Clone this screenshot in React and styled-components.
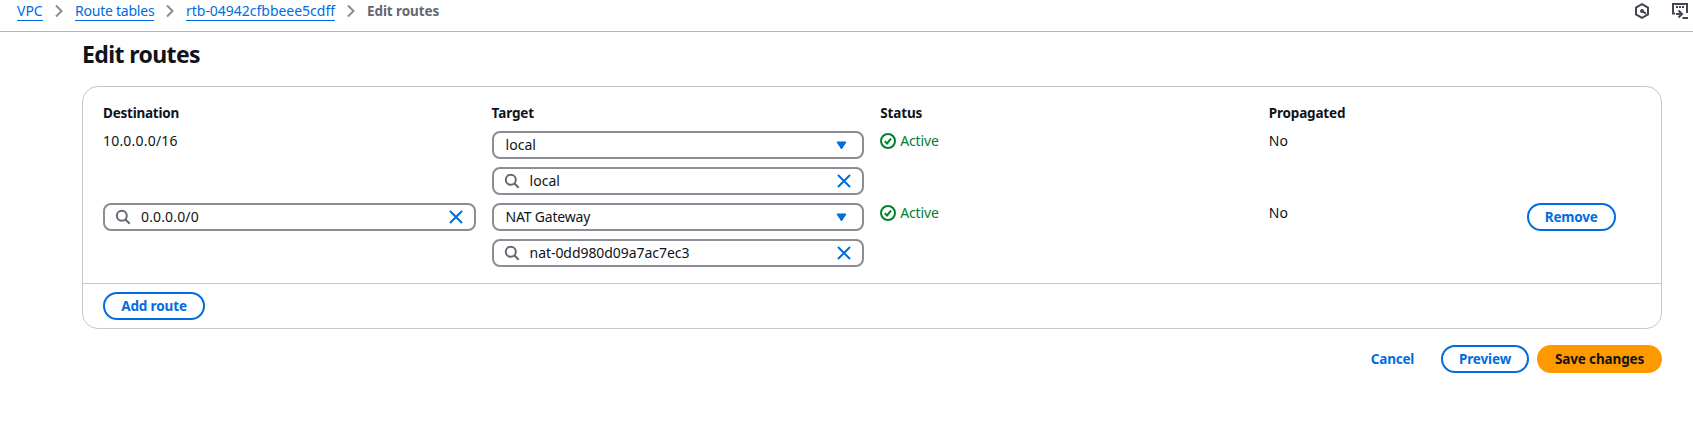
import React from "react";
import styled, { createGlobalStyle } from "styled-components";

const Global = createGlobalStyle`
  * { box-sizing: border-box; }
  body {
    margin: 0;
    background: #fff;
    color: #0f141a;
    font: 14px/20px "Noto Sans", "Open Sans", sans-serif;
  }
`;

const Label = styled.span`
  letter-spacing: ${(p) => p.$track || 0}px;
  white-space: nowrap;
`;

const TopBar = styled.header`
  display: flex;
  justify-content: space-between;
  height: 32px;
  padding: 1px 5px 0 17px;
  border-bottom: 1px solid #b4b4bb;
`;

const Breadcrumbs = styled.nav`
  display: flex;
  align-items: flex-start;
`;

const Crumb = styled.a`
  width: ${(p) => p.$w}px;
  height: 20px;
  border-bottom: 1px solid #006ce0;
  color: #006ce0;
  white-space: nowrap;
`;

const CurrentCrumb = styled.span`
  color: #656871;
  font-size: 13.5px;
  font-weight: 700;
`;

const Separator = styled.svg`
  width: 8px;
  height: 14px;
  margin: 3px 12px 0;
  fill: none;
  stroke: #8c8c94;
  stroke-width: 2;
`;

const Tools = styled.div`
  display: flex;
  gap: 22px;
  padding-top: 1px;
`;

const ToolIcon = styled.svg`
  width: 16px;
  height: 16px;
  margin-top: 1px;
  fill: none;
  stroke: #424650;
  stroke-width: 2;
`;

const Main = styled.main`
  width: 1580px;
  margin-left: 82px;
`;

const Title = styled.h1`
  margin: 0;
  padding-top: 7px;
  height: 54px;
  font-size: 23px;
  line-height: 31px;
  font-weight: 700;
`;

const Panel = styled.section`
  height: 243px;
  border: 1px solid #c6c6cd;
  border-radius: 16px;
`;

const PanelBody = styled.div`
  height: 196px;
  padding: 16px 20px 0;
`;

const PanelFooter = styled.div`
  padding: 8px 20px 0;
  border-top: 1px solid #c6c6cd;
`;

const RouteRow = styled.div`
  display: grid;
  grid-template-columns: repeat(3, 372.6px) 242px auto;
  column-gap: 16px;
  justify-content: start;
  align-items: start;
  margin-bottom: 8px;
`;

const HeaderRow = styled(RouteRow)`
  font-size: 13.5px;
  font-weight: 700;
`;

const Stack = styled.div`
  display: flex;
  flex-direction: column;
  gap: 8px;
`;

const Field = styled.div`
  display: flex;
  align-items: center;
  height: 28px;
  padding: ${(p) => (p.$search ? "0 12px 0 10px" : "0 15px 0 12px")};
  border: 2px solid #8c8c94;
  border-radius: 8px;
`;

const FieldText = styled(Label)`
  flex: 1;
`;

const SearchGlyph = styled.svg`
  width: 16px;
  height: 16px;
  margin-right: 10px;
  fill: none;
  stroke: #656871;
  stroke-width: 2;
`;

const ClearGlyph = styled.svg`
  width: 14px;
  height: 14px;
  margin-right: -1px;
  fill: none;
  stroke: #006ce0;
  stroke-width: 2;
`;

const Caret = styled.svg`
  width: 11px;
  height: 9px;
  fill: #006ce0;
  stroke: #006ce0;
  stroke-linejoin: round;
`;

const Status = styled.div`
  display: flex;
  align-items: center;
  gap: 4px;
  color: #00802f;
`;

const StatusGlyph = styled.svg`
  width: 16px;
  height: 16px;
  fill: none;
  stroke: #00802f;
  stroke-width: 2;
`;

const Button = styled.button`
  display: flex;
  align-items: center;
  justify-content: center;
  width: ${(p) => p.$w}px;
  height: 28px;
  padding: 0;
  border: 2px solid ${(p) => (p.$kind === "primary" ? "#ff9900" : p.$kind === "link" ? "transparent" : "#006ce0")};
  border-radius: 14px;
  background: ${(p) => (p.$kind === "primary" ? "#ff9900" : "transparent")};
  color: ${(p) => (p.$kind === "primary" ? "#0f141a" : "#006ce0")};
  font: inherit;
  font-size: 13.5px;
  font-weight: 700;
`;

const Actions = styled.div`
  display: flex;
  justify-content: flex-end;
  gap: 8px;
  margin-top: 16px;
`;

const Chevron = () => (
  <Separator viewBox="0 0 8 14"><path d="M1 1.5 6.5 7 1 12.5" /></Separator>
);

const SearchField = ({ value, track }) => (
  <Field $search>
    <SearchGlyph viewBox="0 0 16 16"><circle cx="6.8" cy="6.8" r="5" /><path d="m10.5 10.5 4.2 4.2" /></SearchGlyph>
    <FieldText $track={track}>{value}</FieldText>
    <ClearGlyph viewBox="0 0 14 14"><path d="m1 1 12 12M13 1 1 13" /></ClearGlyph>
  </Field>
);

const SelectField = ({ value, track }) => (
  <Field>
    <FieldText $track={track}>{value}</FieldText>
    <Caret viewBox="0 0 11 9"><path d="M1 1h9L5.5 8Z" /></Caret>
  </Field>
);

const ActiveStatus = () => (
  <Status>
    <StatusGlyph viewBox="0 0 16 16"><circle cx="8" cy="8" r="7" /><path d="m4.7 8.1 2.3 2.3 4-4.8" /></StatusGlyph>
    <Label $track={-0.15}>Active</Label>
  </Status>
);

export default function App() {
  return (
    <>
      <Global />
      <TopBar>
        <Breadcrumbs>
          <Crumb $w={26}><Label>VPC</Label></Crumb>
          <Chevron />
          <Crumb $w={79}><Label $track={-0.23}>Route tables</Label></Crumb>
          <Chevron />
          <Crumb $w={149}><Label $track={-0.02}>rtb-04942cfbbeee5cdff</Label></Crumb>
          <Chevron />
          <CurrentCrumb><Label $track={-0.1}>Edit routes</Label></CurrentCrumb>
        </Breadcrumbs>
        <Tools>
          <ToolIcon viewBox="0 0 16 16"><path d="M8 1.2 14 4.6v6.8l-6 3.4-6-3.4V4.6Z" /><circle cx="8" cy="8" r="1" /><path d="m8 8 4 2.6" /></ToolIcon>
          <ToolIcon viewBox="0 0 16 16"><path d="M15 10V1H1v9.5h2M4 4h2M7 4h2M10 4h2M4 11h5M6.5 7.5 10 11l-3.5 3.5M10.5 15H16" /></ToolIcon>
        </Tools>
      </TopBar>
      <Main>
        <Title><Label $track={-0.6}>Edit routes</Label></Title>
        <Panel>
          <PanelBody>
            <HeaderRow>
              <div><Label $track={-0.23}>Destination</Label></div>
              <div><Label $track={-0.13}>Target</Label></div>
              <div><Label $track={-0.13}>Status</Label></div>
              <div><Label $track={-0.18}>Propagated</Label></div>
            </HeaderRow>
            <RouteRow>
              <div><Label $track={0.2}>10.0.0.0/16</Label></div>
              <Stack>
                <SelectField value="local" />
                <SearchField value="local" />
              </Stack>
              <ActiveStatus />
              <div><Label>No</Label></div>
            </RouteRow>
            <RouteRow>
              <SearchField value="0.0.0.0/0" track={0.15} />
              <Stack>
                <SelectField value="NAT Gateway" track={-0.2} />
                <SearchField value="nat-0dd980d09a7ac7ec3" track={-0.06} />
              </Stack>
              <ActiveStatus />
              <div><Label>No</Label></div>
              <Button $w={89}><Label $track={-0.18}>Remove</Label></Button>
            </RouteRow>
          </PanelBody>
          <PanelFooter>
            <Button $w={102}><Label $track={-0.13}>Add route</Label></Button>
          </PanelFooter>
        </Panel>
        <Actions>
          <Button $kind="link" $w={81}><Label $track={-0.2}>Cancel</Label></Button>
          <Button $w={88}><Label $track={-0.13}>Preview</Label></Button>
          <Button $kind="primary" $w={125}><Label $track={-0.13}>Save changes</Label></Button>
        </Actions>
      </Main>
    </>
  );
}
